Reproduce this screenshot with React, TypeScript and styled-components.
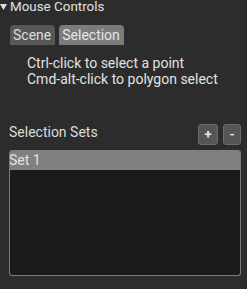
import React, { useState } from "react";
import styled, { createGlobalStyle } from "styled-components";

const Global = createGlobalStyle`
  html, body { margin: 0; padding: 0; background: #2c2c2c; }
  body { font-family: Roboto, "Noto Sans", sans-serif; color: #dcdcdc; }
`;

const Panel = styled.div`
  width: 247px;
  height: 289px;
  background: #2c2c2c;
  display: flex;
  flex-direction: column;
  box-sizing: border-box;
`;

const Header = styled.div`
  display: flex;
  align-items: center;
  gap: 3px;
  height: 14px;
  padding-left: 0;
  font-size: 13.4px;
  line-height: 14px;
  color: #e0e0e0;
`;

const Arrow = styled.svg`
  width: 7px;
  height: 6px;
  flex: none;
`;

const TabBar = styled.div`
  display: flex;
  gap: 4px;
  margin: 11px 0 0 10px;
`;

const Tab = styled.div<{ $active?: boolean }>`
  height: 20px;
  padding: 0 4px 0 3px;
  display: flex;
  align-items: center;
  font-size: 14px;
  border-radius: 4px 4px 0 0;
  background: ${(p) => (p.$active ? "#7b7b7b" : "#575757")};
  color: ${(p) => (p.$active ? "#e6e6e6" : "#dedede")};
  cursor: pointer;
`;

const Hints = styled.div`
  padding: 10px 0 0 27px;
  display: flex;
  flex-direction: column;
  font-size: 14px;
  line-height: 16px;
  color: #e2e2e2;
`;

const SetsHeader = styled.div`
  display: flex;
  align-items: flex-start;
  justify-content: space-between;
  margin: 37px 6px 0 9px;
`;

const SetsLabel = styled.div`
  font-size: 14px;
  line-height: 16px;
`;

const Buttons = styled.div`
  display: flex;
  gap: 5px;
`;

const SmallButton = styled.button<{ $w: number }>`
  width: ${(p) => p.$w}px;
  height: 21px;
  padding: 0;
  box-sizing: border-box;
  background: #555;
  border: 1px solid #6c6c6c;
  border-radius: 3px;
  color: #e8e8e8;
  font-family: Roboto, sans-serif;
  font-size: 13px;
  font-weight: bold;
  line-height: 18px;
`;

const List = styled.div`
  margin: 5px 6px 0 9px;
  height: 126px;
  box-sizing: border-box;
  background: #1b1b1b;
  border: 1px solid #7a7a7a;
  border-top: none;
  border-radius: 3px;
  overflow: hidden;
  display: flex;
  flex-direction: column;
`;

const Row = styled.div<{ $selected?: boolean }>`
  height: 20px;
  margin: 0 -1px;
  display: flex;
  align-items: center;
  font-size: 14px;
  color: #e4e4e4;
  background: ${(p) => (p.$selected ? "#808080" : "transparent")};
`;

export default function App() {
  const [tab, setTab] = useState("Selection");
  return (
    <>
      <Global />
      <Panel>
        <Header>
          <Arrow viewBox="0 0 7 6">
            <path d="M0 0 L7 0 L3.5 6 Z" fill="#e0e0e0" />
          </Arrow>
          <span>Mouse Controls</span>
        </Header>
        <TabBar>
          {["Scene", "Selection"].map((t) => (
            <Tab key={t} $active={tab === t} onClick={() => setTab(t)}>
              {t}
            </Tab>
          ))}
        </TabBar>
        <Hints>
          <span>Ctrl-click to select a point</span>
          <span>Cmd-alt-click to polygon select</span>
        </Hints>
        <SetsHeader>
          <SetsLabel>Selection Sets</SetsLabel>
          <Buttons>
            <SmallButton $w={20}>+</SmallButton>
            <SmallButton $w={18}>-</SmallButton>
          </Buttons>
        </SetsHeader>
        <List>
          <Row $selected>Set 1</Row>
        </List>
      </Panel>
    </>
  );
}
